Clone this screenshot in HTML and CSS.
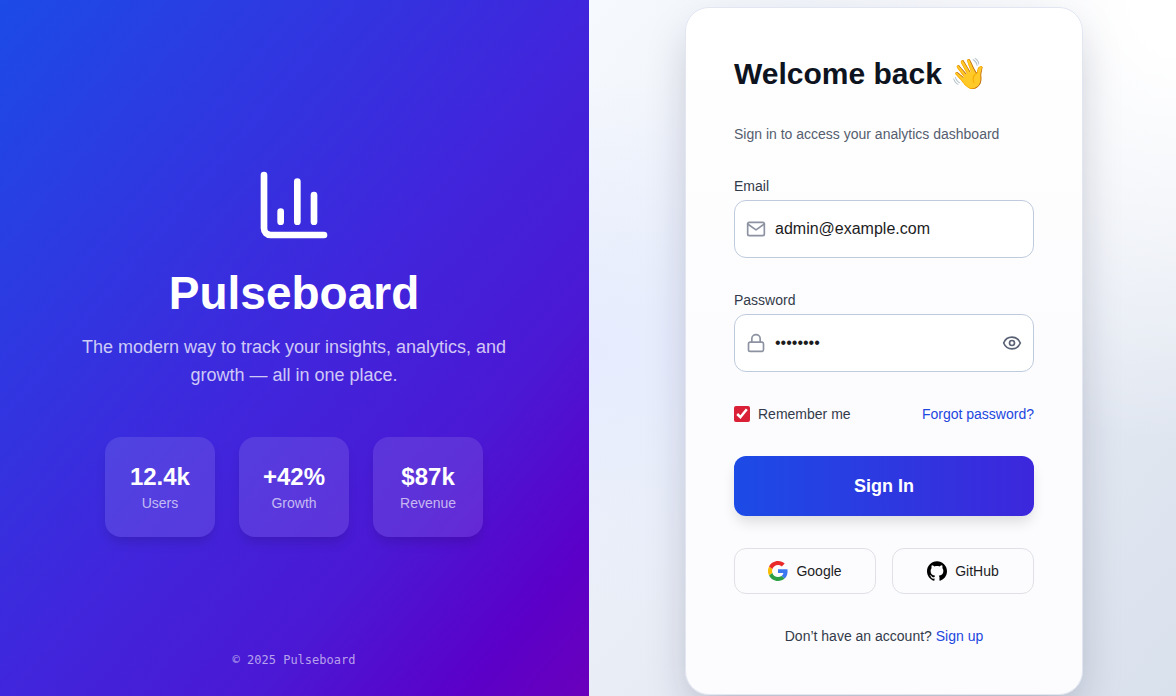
FILE: index.html
```html
<!DOCTYPE html>
<html lang="en">
<head>
<meta charset="utf-8">
<meta name="viewport" content="width=device-width, initial-scale=1">
<title>Pulseboard</title>
<link rel="stylesheet" href="styles.css">
</head>
<body>
<main class="page">
  <section class="brand">
    <div class="brand-main">
      <svg class="brand-logo" viewBox="0 0 24 24" aria-hidden="true"><path d="M3 3v16a2 2 0 0 0 2 2h16M18 17V9M13 17V5M8 17v-3"/></svg>
      <h1 class="brand-name">Pulseboard</h1>
      <p class="brand-text">The modern way to track your insights, analytics, and growth — all in one place.</p>
      <div class="stats">
        <div class="stat"><strong class="stat-value">12.4k</strong><span class="stat-label">Users</span></div>
        <div class="stat"><strong class="stat-value">+42%</strong><span class="stat-label">Growth</span></div>
        <div class="stat"><strong class="stat-value">$87k</strong><span class="stat-label">Revenue</span></div>
      </div>
    </div>
    <footer class="brand-footer">© 2025 Pulseboard</footer>
  </section>
  <section class="auth">
    <form class="card">
      <h2 class="card-title">Welcome back 👋</h2>
      <p class="card-text">Sign in to access your analytics dashboard</p>
      <div class="field">
        <label for="email">Email</label>
        <div class="control">
          <svg class="icon" viewBox="0 0 24 24" aria-hidden="true"><rect x="2" y="4" width="20" height="16" rx="2"/><path d="M22 6l-10 7L2 6"/></svg>
          <input id="email" type="email" value="admin@example.com">
        </div>
      </div>
      <div class="field">
        <label for="password">Password</label>
        <div class="control">
          <svg class="icon" viewBox="0 0 24 24" aria-hidden="true"><rect x="3" y="11" width="18" height="11" rx="2"/><path d="M7 11V7a5 5 0 0 1 10 0v4"/></svg>
          <input id="password" type="password" value="password">
          <button class="reveal" type="button" aria-label="Show password"><svg class="icon" viewBox="0 0 24 24" aria-hidden="true"><path d="M2 12C4 7 8 5 12 5s8 2 10 7c-2 5-6 7-10 7s-8-2-10-7z"/><circle cx="12" cy="12" r="3"/></svg></button>
        </div>
      </div>
      <div class="options">
        <label class="remember"><input type="checkbox" checked>Remember me</label>
        <a href="#">Forgot password?</a>
      </div>
      <button class="submit" type="submit">Sign In</button>
      <div class="socials">
        <button class="social" type="button"><svg viewBox="0 0 48 48" aria-hidden="true"><path fill="#fbbc05" d="M10.5 28.6A14.5 14.5 0 0 1 10.500 19.400L2.600 13.200A24 24 0 0 0 2.600 34.800Z"/><path fill="#ea2a2a" d="M24 9.500c3.500 0 6.700 1.200 9.200 3.600l6.900-6.900C35.900 2.400 30.500 0 24 0 14.600 0 6.500 5.400 2.600 13.200l7.900 6.200C12.400 13.700 17.700 9.500 24 9.500z"/><path fill="#3b78f0" d="M47 24.600c0-1.600-.2-3.100-.4-4.600H24v9h12.900c-.6 3-2.300 5.500-4.800 7.200l7.700 6C44.400 38 47 32 47 24.600z"/><path fill="#2c9f45" d="M24 48c6.500 0 11.900-2.100 15.900-5.800l-7.700-6c-2.200 1.500-4.900 2.300-8.200 2.300-6.300 0-11.600-4.200-13.500-9.900l-7.900 6.200C6.500 42.600 14.600 48 24 48z"/></svg>Google</button>
        <button class="social" type="button"><svg viewBox="0 0 24 24" aria-hidden="true"><path d="M12 .297c-6.630 0-12 5.373-12 12 0 5.303 3.438 9.800 8.205 11.385.6.113.82-.258.82-.577 0-.285-.01-1.040-.015-2.040-3.338.724-4.042-1.610-4.042-1.610C4.422 18.070 3.633 17.700 3.633 17.700c-1.087-.744.084-.729.084-.729 1.205.084 1.838 1.236 1.838 1.236 1.070 1.835 2.809 1.305 3.495.998.108-.776.417-1.305.76-1.605-2.665-.3-5.466-1.332-5.466-5.930 0-1.310.465-2.380 1.235-3.220-.135-.303-.54-1.523.105-3.176 0 0 1.005-.322 3.300 1.230.96-.267 1.980-.399 3-.405 1.020.006 2.040.138 3 .405 2.280-1.552 3.285-1.230 3.285-1.230.645 1.653.24 2.873.12 3.176.765.840 1.230 1.910 1.230 3.220 0 4.610-2.805 5.625-5.475 5.920.42.360.81 1.096.81 2.220 0 1.606-.015 2.896-.015 3.286 0 .315.210.690.825.570C20.565 22.092 24 17.592 24 12.297c0-6.627-5.373-12-12-12"/></svg>GitHub</button>
      </div>
      <p class="signup">Don’t have an account? <a href="#">Sign up</a></p>
    </form>
  </section>
</main>
</body>
</html>
```
FILE: styles.css
```css
* {
  box-sizing: border-box;
}

body,
h1,
h2,
p {
  margin: 0;
}

body {
  font-family: "Liberation Sans", Arial, sans-serif;
  font-size: 14px;
  line-height: 20px;
  color: #333b4a;
}

button,
input {
  font: inherit;
}

a {
  color: #1c47e0;
  text-decoration: none;
}

.page {
  display: grid;
  grid-template-columns: 589fr 587fr;
  min-height: 100vh;
}

.brand {
  display: flex;
  flex-direction: column;
  align-items: center;
  padding: 50px 33px 28px 32px;
  text-align: center;
  color: #fff;
  background: linear-gradient(to bottom right, #1c4be7, #4026dc 50%, #4b18d4 72%, #5b00c8 89%, #6a00bc);
}

.brand-main {
  flex: 1;
  display: flex;
  flex-direction: column;
  align-items: center;
  justify-content: center;
}

.brand-logo {
  width: 80px;
  height: 80px;
  margin-bottom: 24px;
  fill: none;
  stroke: #fff;
  stroke-width: 2;
  stroke-linecap: round;
  stroke-linejoin: round;
}

.brand-name {
  margin-bottom: 16px;
  font-size: 46px;
  line-height: 48px;
}

.brand-text {
  max-width: 448px;
  font-size: 18px;
  line-height: 28px;
  color: rgba(255, 255, 255, 0.76);
}

.stats {
  display: grid;
  grid-template-columns: repeat(3, 1fr);
  gap: 24px;
  margin-top: 48px;
}

.stat {
  display: flex;
  flex-direction: column;
  padding: 24px;
  border-radius: 16px;
  background: rgba(255, 255, 255, 0.11);
  box-shadow: 0 8px 12px -3px rgba(0, 0, 0, 0.14);
}

.stat-value {
  font-size: 24px;
  line-height: 32px;
}

.stat-label {
  color: rgba(255, 255, 255, 0.66);
}

.brand-footer {
  font-family: "DejaVu Sans Mono", monospace;
  font-size: 12px;
  line-height: 16px;
  color: rgba(255, 255, 255, 0.6);
}

.auth {
  display: flex;
  align-items: center;
  justify-content: center;
  padding: 7px 16px 1px 19px;
  overflow: hidden;
  background:
    radial-gradient(ellipse at 100% 0, #fff 5%, rgba(255, 255, 255, 0) 45%),
    radial-gradient(ellipse at 0 50%, #e6ecfe, rgba(230, 236, 254, 0) 55%),
    linear-gradient(to bottom right, #f6f9fd, #e9edf6 50%, #d9e1ec);
}

.card {
  display: flex;
  flex-direction: column;
  gap: 32px;
  width: 100%;
  max-width: 398px;
  padding: 48px;
  border: 1px solid #e2e6f1;
  border-radius: 24px;
  background: linear-gradient(#fff, #fcfcfe 50%);
  box-shadow: 0 20px 45px -8px rgba(20, 20, 50, 0.25);
}

.card-title {
  font-size: 30px;
  line-height: 36px;
  color: #0e1320;
}

.card-text {
  color: #555d6e;
}

.field {
  display: flex;
  flex-direction: column;
  gap: 4px;
}

.control {
  display: flex;
  align-items: center;
  gap: 9px;
  padding: 16px 11px;
  border: 1px solid #bfcbdd;
  border-radius: 12px;
  background: #fff;
}

.control input {
  flex: 1;
  min-width: 0;
  padding: 0;
  border: 0;
  outline: 0;
  font-size: 16px;
  line-height: 24px;
  height: 24px;
  color: #1c1c1e;
  background: none;
}

.icon {
  display: block;
  flex: none;
  width: 20px;
  height: 20px;
  fill: none;
  stroke: #8c92a1;
  stroke-width: 2;
  stroke-linecap: round;
  stroke-linejoin: round;
}

.reveal {
  padding: 0;
  border: 0;
  background: none;
}

.reveal .icon {
  stroke: #596174;
}

.options {
  display: flex;
  align-items: center;
  justify-content: space-between;
}

.remember {
  display: flex;
  align-items: center;
  gap: 8px;
}

.remember input {
  width: 16px;
  height: 16px;
  margin: 0;
  accent-color: #d92036;
}

.submit {
  padding: 16px;
  border: 0;
  border-radius: 12px;
  font-size: 18px;
  font-weight: 700;
  line-height: 28px;
  color: #fff;
  background: linear-gradient(to right, #1c4be6, #3d27dc);
  box-shadow: 0 8px 14px -2px rgba(0, 0, 0, 0.13);
}

.socials {
  display: grid;
  grid-template-columns: 1fr 1fr;
  gap: 16px;
}

.social {
  display: flex;
  align-items: center;
  justify-content: center;
  gap: 8px;
  padding: 12px;
  border: 1px solid #dfe1e6;
  border-radius: 12px;
  color: #1c1c1e;
  background: none;
}

.social svg {
  width: 20px;
  height: 20px;
}

.signup {
  text-align: center;
}
```
